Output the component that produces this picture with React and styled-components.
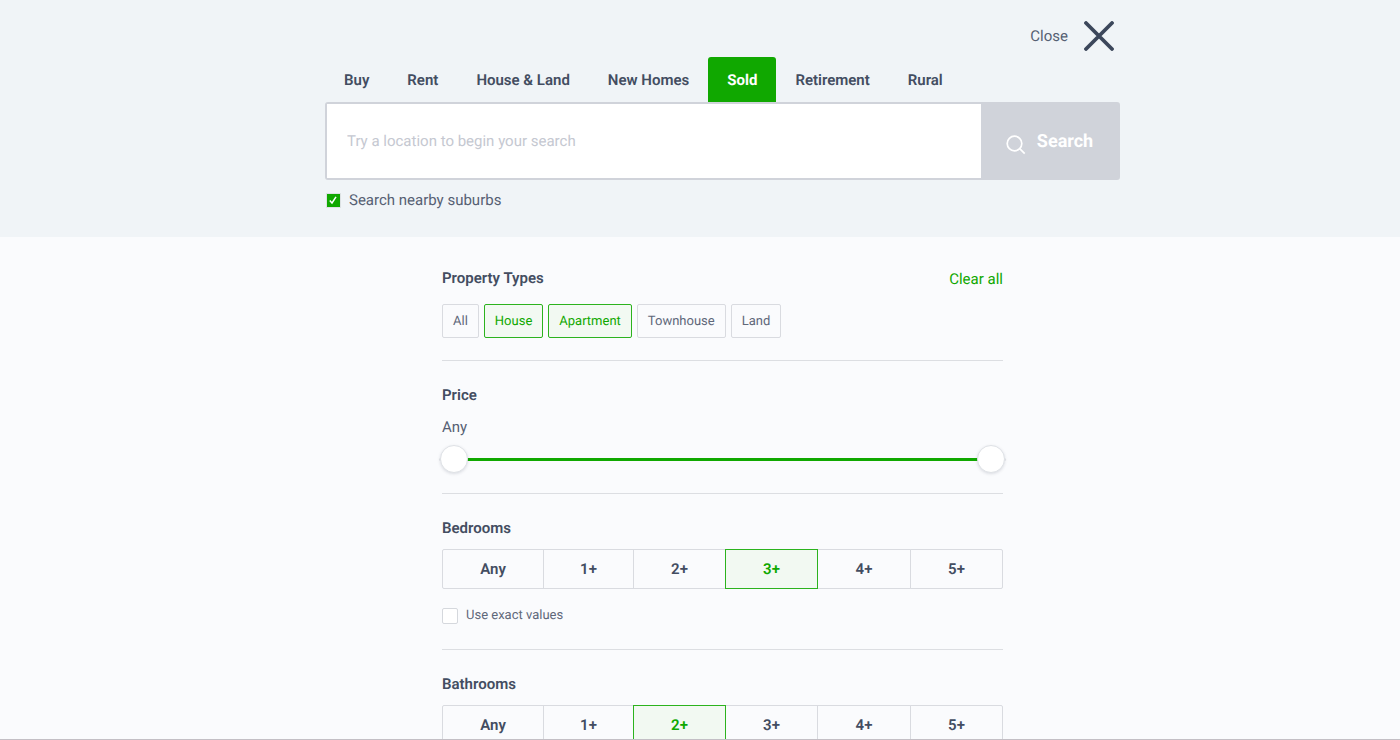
import React, { useState } from 'react';
import styled, { createGlobalStyle } from 'styled-components';

const tabs = ['Buy', 'Rent', 'House & Land', 'New Homes', 'Sold', 'Retirement', 'Rural'];
const propertyTypes = ['All', 'House', 'Apartment', 'Townhouse', 'Land'];
const roomOptions = ['Any', '1+', '2+', '3+', '4+', '5+'];

const RoomPicker = ({ label, value, onChange }) => (
    <Segments role="group" aria-label={label}>
        {roomOptions.map((option) => (
            <Segment
                key={option}
                type="button"
                aria-pressed={option === value}
                $active={option === value}
                onClick={() => onChange(option)}
            >
                {option}
            </Segment>
        ))}
    </Segments>
);

const Checkbox = ({ id, size, checked, onChange }) => (
    <CheckboxBox>
        <CheckboxInput
            id={id}
            type="checkbox"
            $size={size}
            checked={checked}
            onChange={(e) => onChange(e.target.checked)}
        />
        {checked && (
            <Tick viewBox="0 0 14 14" aria-hidden="true">
                <path d="M3.8 7.4 L6 9.9 L10 3.8" fill="none" stroke="#ffffff" strokeWidth="1.5" />
            </Tick>
        )}
    </CheckboxBox>
);

const App = () => {
    const [tab, setTab] = useState('Sold');
    const [nearby, setNearby] = useState(true);
    const [types, setTypes] = useState(['House', 'Apartment']);
    const [price, setPrice] = useState([0, 100]);
    const [bedrooms, setBedrooms] = useState('3+');
    const [exact, setExact] = useState(false);
    const [bathrooms, setBathrooms] = useState('2+');

    const toggleType = (type) => {
        setTypes(types.includes(type) ? types.filter((t) => t !== type) : [...types, type]);
    };

    return (
        <Page>
            <GlobalStyle />
            <Header>
                <HeaderInner>
                    <CloseRow>
                        <CloseButton type="button">
                            Close
                            <svg width="30" height="30" viewBox="0 0 30 30" aria-hidden="true">
                                <path d="M2 2 L28 28 M28 2 L2 28" stroke="#3c475b" strokeWidth="3.8" strokeLinecap="round" />
                            </svg>
                        </CloseButton>
                    </CloseRow>
                    <Tabs>
                        {tabs.map((name) => (
                            <Tab key={name} type="button" $active={name === tab} onClick={() => setTab(name)}>
                                {name}
                            </Tab>
                        ))}
                    </Tabs>
                    <SearchBar>
                        <SearchInput type="text" aria-label="Location" placeholder="Try a location to begin your search" />
                        <SearchButton type="submit">
                            <SearchIcon width="20" height="20" viewBox="0 0 20 20" aria-hidden="true">
                                <circle cx="8.5" cy="8.5" r="7.3" />
                                <path d="M13.7 13.7 L18.7 18.7" />
                            </SearchIcon>
                            Search
                        </SearchButton>
                    </SearchBar>
                    <NearbyRow>
                        <Checkbox id="nearby" size={13} checked={nearby} onChange={setNearby} />
                        <label htmlFor="nearby">Search nearby suburbs</label>
                    </NearbyRow>
                </HeaderInner>
            </Header>
            <Filters>
                <FiltersInner>
                    <Section>
                        <SectionHeader>
                            <Title>Property Types</Title>
                            <ClearButton type="button" onClick={() => setTypes([])}>Clear all</ClearButton>
                        </SectionHeader>
                        <Chips>
                            {propertyTypes.map((type) => (
                                <Chip
                                    key={type}
                                    type="button"
                                    aria-pressed={types.includes(type)}
                                    $active={types.includes(type)}
                                    onClick={() => toggleType(type)}
                                >
                                    {type}
                                </Chip>
                            ))}
                        </Chips>
                    </Section>
                    <Section>
                        <Title>Price</Title>
                        <PriceValue>Any</PriceValue>
                        <Slider>
                            <Rail />
                            <RailFill style={{ left: `${price[0]}%`, right: `${100 - price[1]}%` }} />
                            <Range
                                type="range"
                                aria-label="Minimum price"
                                value={price[0]}
                                onChange={(e) => setPrice([Math.min(+e.target.value, price[1]), price[1]])}
                            />
                            <Range
                                type="range"
                                aria-label="Maximum price"
                                value={price[1]}
                                onChange={(e) => setPrice([price[0], Math.max(+e.target.value, price[0])])}
                            />
                        </Slider>
                    </Section>
                    <Section>
                        <Title>Bedrooms</Title>
                        <RoomPicker label="Bedrooms" value={bedrooms} onChange={setBedrooms} />
                        <ExactRow>
                            <Checkbox id="exact" size={16} checked={exact} onChange={setExact} />
                            <label htmlFor="exact">Use exact values</label>
                        </ExactRow>
                    </Section>
                    <Section>
                        <Title>Bathrooms</Title>
                        <RoomPicker label="Bathrooms" value={bathrooms} onChange={setBathrooms} />
                    </Section>
                </FiltersInner>
            </Filters>
        </Page>
    );
};

const GlobalStyle = createGlobalStyle`
  * {
    box-sizing: border-box;
  }

  body {
    margin: 0;
    background-color: #fafbfd;
    color: #3c475b;
    font-family: Roboto, 'Liberation Sans', sans-serif;
    font-size: 15px;
    line-height: 20px;
    text-rendering: geometricPrecision;
  }

  button, input {
    font-family: inherit;
    text-rendering: inherit;
    margin: 0;
  }

  button {
    cursor: pointer;
  }
`;

const Page = styled.div`
  display: flex;
  flex-direction: column;
  height: 100vh;
  border-bottom: 1px solid #c3bfc5;
`;

const Header = styled.header`
  flex: none;
  padding: 20px 20px 27px 65px;
  background-color: #f0f4f7;
`;

const HeaderInner = styled.div`
  max-width: 795px;
  margin: 0 auto;
`;

const CloseRow = styled.div`
  display: flex;
  justify-content: flex-end;
  padding-right: 6px;
`;

const CloseButton = styled.button`
  display: flex;
  align-items: center;
  gap: 16px;
  height: 32px;
  padding: 0;
  border: none;
  background: none;
  color: #566073;
  font-size: 15px;
`;

const Tabs = styled.nav`
  display: flex;
  margin-top: 5px;
`;

const Tab = styled.button`
  height: 45px;
  padding: 0 19px;
  border: none;
  border-radius: 3px 3px 0 0;
  background-color: ${({ $active }) => ($active ? '#10a800' : 'transparent')};
  color: ${({ $active }) => ($active ? '#ffffff' : '#434d61')};
  font-size: 15px;
  font-weight: ${({ $active }) => ($active ? 700 : 600)};
  white-space: nowrap;
`;

const SearchBar = styled.div`
  display: flex;
  height: 78px;
  border: 2px solid #d0d3da;
  border-radius: 3px;
  background-color: #d0d3da;
`;

const SearchInput = styled.input`
  flex: 1;
  min-width: 0;
  padding: 0 20px;
  border: none;
  outline: none;
  background-color: #ffffff;
  color: #3c475b;
  font-size: 15px;

  &::placeholder {
    color: #c5c8d1;
    opacity: 1;
  }
`;

const SearchButton = styled.button`
  display: flex;
  align-items: center;
  justify-content: center;
  gap: 11px;
  width: 137px;
  padding: 0;
  border: none;
  background-color: #d0d3da;
  color: #ffffff;
  font-size: 18px;
  font-weight: 700;
`;

const SearchIcon = styled.svg`
  margin-top: 7px;
  fill: none;
  stroke: #ffffff;
  stroke-width: 1.7;
`;

const NearbyRow = styled.div`
  display: flex;
  align-items: center;
  gap: 9px;
  margin-top: 10px;
  padding-left: 1px;
  color: #566073;
`;

const CheckboxBox = styled.span`
  display: grid;
  place-items: center;

  > * {
    grid-area: 1 / 1;
  }
`;

const CheckboxInput = styled.input`
  appearance: none;
  width: ${({ $size }) => $size}px;
  height: ${({ $size }) => $size}px;
  border: 1px solid #d5d8dd;
  border-radius: 2px;
  background-color: #ffffff;

  &:checked {
    border-color: #10a800;
    border-radius: 0;
    background-color: #10a800;
    box-shadow: 0 0 0 1px #dde2e4;
  }
`;

const Tick = styled.svg`
  width: 14px;
  height: 14px;
  pointer-events: none;
`;

const Filters = styled.main`
  flex: 1;
  min-height: 0;
  padding: 5px 20px 0 65px;
  overflow-y: auto;
  scrollbar-width: none;
`;

const FiltersInner = styled.div`
  max-width: 561px;
  margin: 0 auto;
`;

const Section = styled.section`
  padding: 24px 0 20px;
  border-bottom: 1px solid #dcdee2;

  &:last-child {
    border-bottom: none;
  }
`;

const SectionHeader = styled.div`
  display: flex;
  justify-content: space-between;
  align-items: center;
`;

const Title = styled.h2`
  margin: 0;
  color: #434d61;
  font-size: 15px;
  font-weight: 600;
  line-height: 20px;
`;

const ClearButton = styled.button`
  padding: 3px 0 0;
  border: none;
  background: none;
  color: #10a800;
  font-size: 15px;
  line-height: 20px;
`;

const Chips = styled.div`
  display: flex;
  flex-wrap: wrap;
  gap: 5px;
  margin-top: 15px;
  padding-bottom: 2px;
`;

const Chip = styled.button`
  height: 34px;
  padding: 0 10px;
  border: 1px solid ${({ $active }) => ($active ? '#2cb31e' : '#d9dbe0')};
  border-radius: 2px;
  background-color: ${({ $active }) => ($active ? '#f2f9f2' : 'transparent')};
  color: ${({ $active }) => ($active ? '#10a800' : '#5f687a')};
  font-size: 13px;
`;

const PriceValue = styled.p`
  margin: 12px 0 0;
  color: #566073;
  font-size: 15px;
`;

const Slider = styled.div`
  position: relative;
  height: 28px;
  margin: 8px -3px 0;
`;

const Rail = styled.div`
  position: absolute;
  top: 13px;
  left: 0;
  right: 0;
  height: 3px;
  border-radius: 2px;
  background-color: #e3e6ea;
`;

const RailFill = styled(Rail)`
  border: solid transparent;
  border-width: 0 14px;
  background-color: #10a800;
  background-clip: padding-box;
`;

const Range = styled.input`
  position: absolute;
  top: 0;
  left: 1px;
  width: calc(100% - 2px);
  height: 28px;
  appearance: none;
  background: none;
  pointer-events: none;

  &::-webkit-slider-thumb {
    appearance: none;
    width: 28px;
    height: 28px;
    border: 1px solid #dfe2e6;
    border-radius: 50%;
    background-color: #ffffff;
    box-shadow: 0 1px 3px rgba(60, 71, 91, 0.16);
    pointer-events: auto;
    cursor: pointer;
  }
`;

const Segments = styled.div`
  display: grid;
  grid-template-columns: 101fr 90fr 92fr 92fr 93fr 93fr;
  margin-top: 11px;
`;

const Segment = styled.button`
  height: 40px;
  margin-right: -1px;
  padding: 0;
  border: 1px solid ${({ $active }) => ($active ? '#2cb31e' : '#d9dbe0')};
  background-color: ${({ $active }) => ($active ? '#f2f9f2' : '#fafbfd')};
  color: ${({ $active }) => ($active ? '#10a800' : '#434d61')};
  font-size: 15px;
  font-weight: 600;
  z-index: ${({ $active }) => ($active ? 1 : 0)};

  &:first-child {
    border-radius: 2px 0 0 2px;
  }

  &:last-child {
    margin-right: 0;
    border-radius: 0 2px 2px 0;
  }
`;

const ExactRow = styled.div`
  display: flex;
  align-items: center;
  gap: 8px;
  margin-top: 17px;
  padding-bottom: 3px;
  color: #5f687a;
  font-size: 13px;
`;

export default App;
